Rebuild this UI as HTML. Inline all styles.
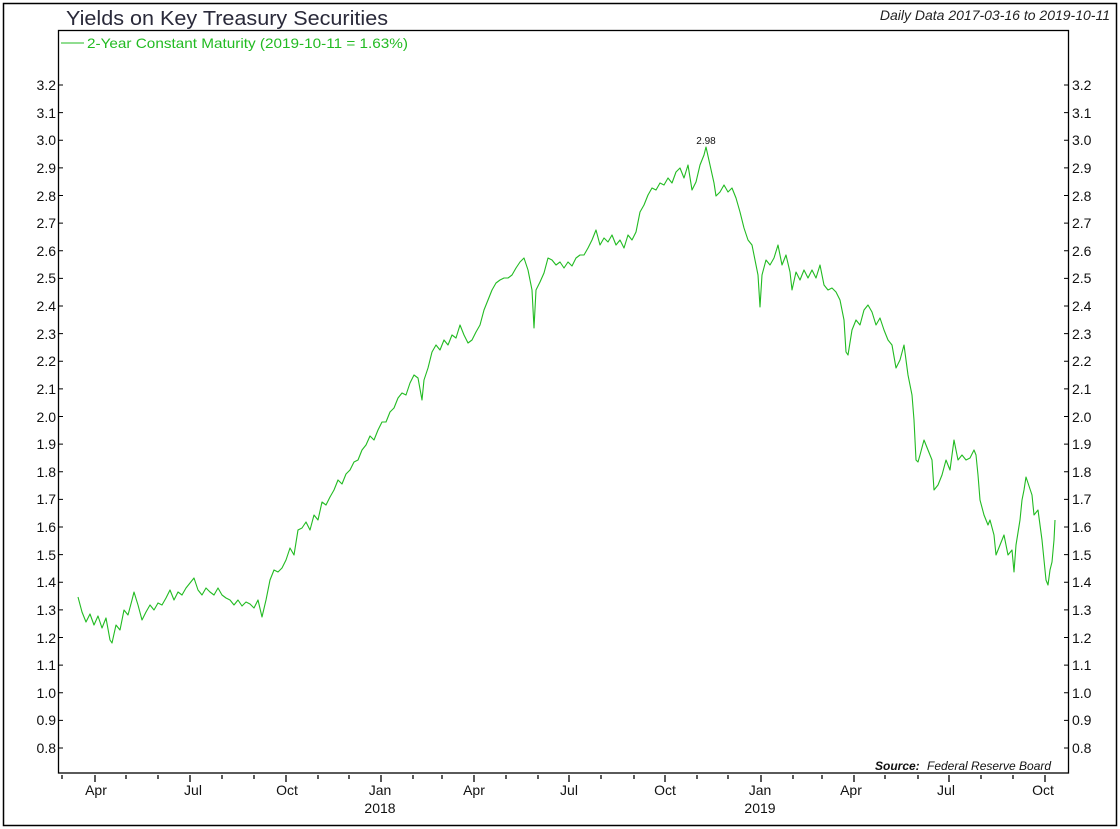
<!DOCTYPE html>
<html><head><meta charset="utf-8"><style>
html,body{margin:0;padding:0;background:#fff;}
svg{display:block;font-family:"Liberation Sans",sans-serif;}
</style></head><body>
<svg width="1120" height="829" viewBox="0 0 1120 829" xmlns="http://www.w3.org/2000/svg">
<rect x="3.5" y="3.5" width="1113" height="822" fill="none" stroke="#000" stroke-width="1.5"/>
<text x="66" y="25" font-size="20" fill="#2a2a3a" textLength="322" lengthAdjust="spacingAndGlyphs">Yields on Key Treasury Securities</text>
<text x="1110" y="20" font-size="14" font-style="italic" fill="#222" text-anchor="end">Daily Data 2017-03-16 to 2019-10-11</text>
<rect x="58.5" y="30.5" width="1010" height="742.5" fill="none" stroke="#000" stroke-width="1.3"/>
<line x1="61" y1="43" x2="84" y2="43" stroke="#22bb22" stroke-width="1"/>
<text x="87" y="48" font-size="14" fill="#22bb22" textLength="321" lengthAdjust="spacingAndGlyphs">2-Year Constant Maturity (2019-10-11 = 1.63%)</text>
<g font-size="14" fill="#111">
<g text-anchor="end">
<text x="56" y="90">3.2</text><text x="56" y="118">3.1</text><text x="56" y="145">3.0</text><text x="56" y="173">2.9</text><text x="56" y="201">2.8</text><text x="56" y="228">2.7</text><text x="56" y="256">2.6</text><text x="56" y="283">2.5</text><text x="56" y="311">2.4</text><text x="56" y="339">2.3</text><text x="56" y="366">2.2</text><text x="56" y="394">2.1</text><text x="56" y="422">2.0</text><text x="56" y="449">1.9</text><text x="56" y="477">1.8</text><text x="56" y="504">1.7</text><text x="56" y="532">1.6</text><text x="56" y="560">1.5</text><text x="56" y="587">1.4</text><text x="56" y="615">1.3</text><text x="56" y="643">1.2</text><text x="56" y="670">1.1</text><text x="56" y="698">1.0</text><text x="56" y="725">0.9</text><text x="56" y="753">0.8</text>
</g>
<g>
<text x="1072" y="90">3.2</text><text x="1072" y="118">3.1</text><text x="1072" y="145">3.0</text><text x="1072" y="173">2.9</text><text x="1072" y="201">2.8</text><text x="1072" y="228">2.7</text><text x="1072" y="256">2.6</text><text x="1072" y="283">2.5</text><text x="1072" y="311">2.4</text><text x="1072" y="339">2.3</text><text x="1072" y="366">2.2</text><text x="1072" y="394">2.1</text><text x="1072" y="422">2.0</text><text x="1072" y="449">1.9</text><text x="1072" y="477">1.8</text><text x="1072" y="504">1.7</text><text x="1072" y="532">1.6</text><text x="1072" y="560">1.5</text><text x="1072" y="587">1.4</text><text x="1072" y="615">1.3</text><text x="1072" y="643">1.2</text><text x="1072" y="670">1.1</text><text x="1072" y="698">1.0</text><text x="1072" y="725">0.9</text><text x="1072" y="753">0.8</text>
</g>
</g>
<path stroke="#000" stroke-width="1" d="M58 85h5M58 112.6h5M58 140.3h5M58 167.9h5M58 195.5h5M58 223.1h5M58 250.8h5M58 278.4h5M58 306h5M58 333.6h5M58 361.3h5M58 388.9h5M58 416.5h5M58 444.1h5M58 471.8h5M58 499.4h5M58 527h5M58 554.6h5M58 582.3h5M58 609.9h5M58 637.5h5M58 665.1h5M58 692.8h5M58 720.4h5M58 748h5
M1064 85h5M1064 112.6h5M1064 140.3h5M1064 167.9h5M1064 195.5h5M1064 223.1h5M1064 250.8h5M1064 278.4h5M1064 306h5M1064 333.6h5M1064 361.3h5M1064 388.9h5M1064 416.5h5M1064 444.1h5M1064 471.8h5M1064 499.4h5M1064 527h5M1064 554.6h5M1064 582.3h5M1064 609.9h5M1064 637.5h5M1064 665.1h5M1064 692.8h5M1064 720.4h5M1064 748h5"/>
<path stroke="#000" stroke-width="1.3" d="M62 775v4M95 775v7M126 775v4M158 775v4M190 775v7M222 775v4M254 775v4M286 775v7M318 775v4M349 775v4M381 775v7M413 775v4M442 775v4M474 775v7M506 775v4M538 775v4M569 775v7M601 775v4M634 775v4M665 775v7M697 775v4M728 775v4M761 775v7M793 775v4M822 775v4M854 775v7M885 775v4M918 775v4M949 775v7M981 775v4M1013 775v4M1045 775v7"/>
<g font-size="14" fill="#111" text-anchor="middle">
<text x="96" y="795">Apr</text><text x="193" y="795">Jul</text><text x="287" y="795">Oct</text><text x="380" y="795">Jan</text><text x="474" y="795">Apr</text><text x="569" y="795">Jul</text><text x="665" y="795">Oct</text><text x="760" y="795">Jan</text><text x="851" y="795">Apr</text><text x="946" y="795">Jul</text><text x="1043" y="795">Oct</text>
<text x="380" y="813">2018</text><text x="760" y="813">2019</text>
</g>
<text x="875" y="770" font-size="12" font-style="italic" font-weight="bold" fill="#111">Source:</text>
<text x="927" y="770" font-size="12" font-style="italic" fill="#111">Federal Reserve Board</text>
<text x="706" y="144" font-size="10" fill="#111" text-anchor="middle">2.98</text>
<polyline fill="none" stroke="#22bb22" stroke-width="1.1" stroke-linejoin="round" points="78,597 82,612 86,622 90,614 94,625 98,616 102,628 106,618 110,640 112,643 116,625 120,630 124,610 128,615 132,600 134,592 138,605 142,620 146,612 150,605 154,610 158,603 162,605 166,598 170,590 174,600 178,592 182,595 186,588 190,583 194,578 198,590 202,595 206,588 210,592 214,595 218,588 222,595 226,598 230,600 234,605 238,600 242,606 246,602 250,604 254,608 258,600 262,617 266,600 270,580 274,570 278,572 282,568 286,560 290,548 294,555 298,530 302,528 306,522 310,530 314,515 318,520 322,502 326,505 330,497 334,490 338,480 342,484 346,474 350,470 354,462 358,460 362,450 366,445 370,436 374,440 378,430 382,422 386,422 390,412 394,408 398,398 402,393 406,395 410,383 414,375 418,378 422,400 424,380 428,368 432,352 436,345 440,350 444,340 448,345 452,335 456,338 460,325 464,335 468,343 472,340 476,332 480,325 484,310 488,300 492,290 496,283 500,280 504,278 508,278 512,275 516,268 520,262 524,258 528,270 532,290 534,328 536,290 540,282 544,273 548,258 552,260 556,265 560,262 564,268 568,262 572,266 576,258 580,255 584,255 588,248 592,240 596,230 600,245 604,238 608,242 612,235 616,245 620,240 624,248 628,235 632,240 636,232 640,212 644,205 648,195 652,188 656,190 660,183 664,185 668,178 672,183 676,172 680,168 684,178 688,165 692,190 696,182 700,165 704,155 706,147 710,165 714,183 716,196 720,192 724,185 728,192 732,188 736,198 740,212 744,228 748,240 752,245 756,265 758,275 760,307 762,275 766,260 770,265 774,258 778,245 782,265 786,255 790,272 792,290 796,272 800,280 804,270 808,278 812,270 816,278 820,265 824,285 828,290 832,288 836,292 840,300 844,320 846,352 848,355 852,330 856,320 860,325 864,310 868,305 872,312 876,325 880,318 884,330 888,340 892,345 896,368 900,360 904,345 908,375 912,395 914,420 916,460 918,462 920,455 924,440 928,450 932,460 934,490 938,485 942,475 946,460 950,470 954,440 958,460 962,455 966,460 970,458 974,450 976,455 978,475 980,500 984,515 988,525 990,520 994,535 996,555 1000,545 1004,535 1008,555 1012,550 1014,572 1016,545 1020,520 1022,500 1024,490 1026,477 1028,483 1032,495 1034,515 1038,510 1042,540 1046,580 1048,585 1050,570 1052,562 1054,540 1055,520"/>
</svg>
</body></html>
